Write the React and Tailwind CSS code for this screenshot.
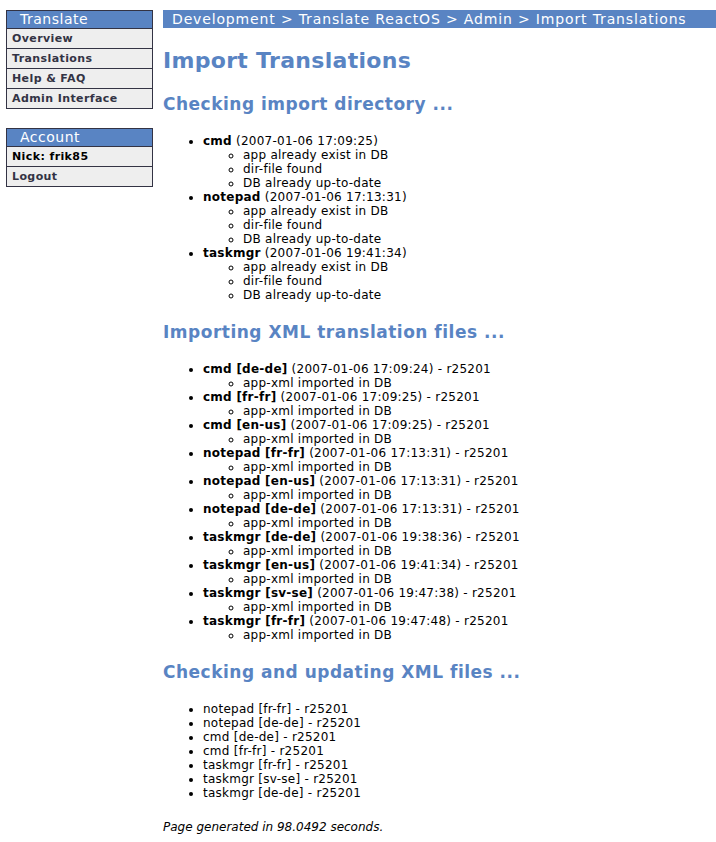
import React from 'react';

const font = { fontFamily: '"DejaVu Sans", Verdana, sans-serif' };

const navItems = ['Overview', 'Translations', 'Help & FAQ', 'Admin Interface'];

const checked = [
  { name: 'cmd', time: '2007-01-06 17:09:25' },
  { name: 'notepad', time: '2007-01-06 17:13:31' },
  { name: 'taskmgr', time: '2007-01-06 19:41:34' },
];

const imported = [
  ['cmd [de-de]', '2007-01-06 17:09:24'],
  ['cmd [fr-fr]', '2007-01-06 17:09:25'],
  ['cmd [en-us]', '2007-01-06 17:09:25'],
  ['notepad [fr-fr]', '2007-01-06 17:13:31'],
  ['notepad [en-us]', '2007-01-06 17:13:31'],
  ['notepad [de-de]', '2007-01-06 17:13:31'],
  ['taskmgr [de-de]', '2007-01-06 19:38:36'],
  ['taskmgr [en-us]', '2007-01-06 19:41:34'],
  ['taskmgr [sv-se]', '2007-01-06 19:47:38'],
  ['taskmgr [fr-fr]', '2007-01-06 19:47:48'],
];

const updated = [
  'notepad [fr-fr]',
  'notepad [de-de]',
  'cmd [de-de]',
  'cmd [fr-fr]',
  'taskmgr [fr-fr]',
  'taskmgr [sv-se]',
  'taskmgr [de-de]',
];

const SideBox = ({ title, children, className = '' }) => (
  <div className={`border border-[#333344] ${className}`}>
    <div className="h-[17px] bg-[#5984c3] pl-[13px] text-[14px] leading-[17px] tracking-[0.5px] text-white">{title}</div>
    {children}
  </div>
);

const SideItem = ({ children, dark }) => (
  <div
    className={`h-[20px] border-t border-[#333344] bg-[#eeeeee] pl-[5px] text-[11px] font-bold leading-[19px] tracking-[0.4px] ${
      dark ? 'text-black' : 'text-[#333344]'
    }`}
  >
    {children}
  </div>
);

const H2 = ({ children }) => (
  <h2 className="mt-[20px] text-[17px] font-bold leading-[20px] tracking-[0.5px] text-[#5984c3]">{children}</h2>
);

export default function App() {
  return (
    <div className="flex bg-white pt-[10px] text-[12px] leading-[14px] text-black" style={font}>
      <div className="ml-[6px] w-[147px] shrink-0">
        <SideBox title="Translate">
          {navItems.map((n) => (
            <SideItem key={n}>{n}</SideItem>
          ))}
        </SideBox>
        <SideBox title="Account" className="mt-[19px]">
          <SideItem dark>Nick: frik85</SideItem>
          <SideItem>Logout</SideItem>
        </SideBox>
      </div>

      <div className="ml-[10px] flex-1">
        <div className="h-[18px] bg-[#5984c3] pl-[9px] text-[14px] leading-[18px] tracking-[0.85px] text-white">
          Development &gt; Translate ReactOS &gt; Admin &gt; Import Translations
        </div>

        <h1 className="mt-[20px] text-[22px] font-bold leading-[26px] tracking-[0.3px] text-[#5984c3]">
          Import Translations
        </h1>

        <H2>Checking import directory ...</H2>
        <ul className="mt-[20px] list-disc pl-[40px] tracking-[0.25px]">
          {checked.map((c) => (
            <li key={c.name}>
              <b>{c.name}</b> ({c.time})
              <ul className="list-[circle] pl-[40px]">
                <li>app already exist in DB</li>
                <li>dir-file found</li>
                <li>DB already up-to-date</li>
              </ul>
            </li>
          ))}
        </ul>

        <H2>Importing XML translation files ...</H2>
        <ul className="mt-[20px] list-disc pl-[40px] tracking-[0.25px]">
          {imported.map(([n, t]) => (
            <li key={n}>
              <b>{n}</b> ({t}) - r25201
              <ul className="list-[circle] pl-[40px]">
                <li>app-xml imported in DB</li>
              </ul>
            </li>
          ))}
        </ul>

        <H2>Checking and updating XML files ...</H2>
        <ul className="mt-[20px] list-disc pl-[40px] tracking-[0.25px]">
          {updated.map((u) => (
            <li key={u}>{u} - r25201</li>
          ))}
        </ul>

        <p className="mt-[20px] pb-[16px] italic">Page generated in 98.0492 seconds.</p>
      </div>
    </div>
  );
}
